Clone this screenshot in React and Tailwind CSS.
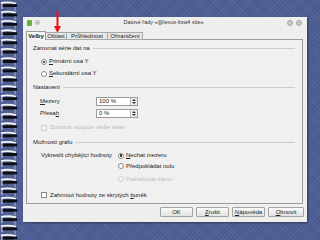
import React from 'react';

function Spiral() {
  const rings = [];
  for (let i = 0; i < 26; i++) {
    const y = 3 + i * 9.3;
    rings.push(
      <g key={i}>
        <path d={`M1 ${y} Q8 ${y - 1.5} 16 ${y + 0.5}`} stroke="#f4f4f4" strokeWidth="1.8" fill="none" />
        <path d={`M3 ${y + 2.7} L16 ${y + 2.7}`} stroke="#0d0d12" strokeWidth="2.8" strokeLinecap="round" />
        <path d={`M2 ${y + 0.5} L2 ${y + 6}`} stroke="#e4e4ea" strokeWidth="1" />
        <path d={`M15 ${y + 4} L15 ${y + 8}`} stroke="#c8c8d4" strokeWidth="0.8" />
      </g>
    );
  }
  return (
    <svg width="23" height="240" className="shrink-0">
      {rings}
    </svg>
  );
}

function Radio({ checked, disabled }) {
  return (
    <span className={`w-[6px] h-[6px] rounded-full border flex items-center justify-center shrink-0 ${disabled ? 'border-[#cfcfcf] bg-[#f4f4f4]' : 'border-[#8a8a8a] bg-white'}`}>
      {checked && <span className="w-[2.5px] h-[2.5px] rounded-full bg-[#222]" />}
    </span>
  );
}

function Check({ disabled }) {
  return <span className={`w-[6px] h-[6px] border shrink-0 ${disabled ? 'border-[#cfcfcf] bg-[#f4f4f4]' : 'border-[#8a8a8a] bg-white'}`} />;
}

function Header({ text, h }) {
  return (
    <div className={`flex items-center pl-[6px] pr-[7px] ${h}`}>
      <span>{text}</span>
      <span className="flex-1 h-px bg-[#cdcdcd] ml-[3px]" />
    </div>
  );
}

function Spin({ value }) {
  return (
    <div className="w-[42px] h-[9px] bg-white border border-[#9a9a9a] flex items-center">
      <span className="flex-1 pl-[2px] leading-none">{value}</span>
      <span className="w-[7px] h-full border-l border-[#bdbdbd] bg-[#ececec] flex flex-col items-center justify-center gap-[1px]">
        <span className="w-0 h-0 border-l-[2px] border-r-[2px] border-b-[2px] border-l-transparent border-r-transparent border-b-[#333]" />
        <span className="w-0 h-0 border-l-[2px] border-r-[2px] border-t-[2px] border-l-transparent border-r-transparent border-t-[#333]" />
      </span>
    </div>
  );
}

function Btn({ children, w }) {
  return (
    <div className={`${w} h-[10px] border border-[#a4a4a4] rounded-[1px] bg-gradient-to-b from-[#fafafa] to-[#e2e2e2] flex items-center justify-center leading-none`}>
      {children}
    </div>
  );
}

export default function App() {
  return (
    <div className="w-[320px] h-[240px] relative overflow-hidden bg-[#4f5f96] bg-[repeating-linear-gradient(45deg,rgba(255,255,255,0.06)_0px,rgba(255,255,255,0.06)_1px,transparent_1px,transparent_3px),repeating-linear-gradient(-45deg,rgba(0,0,30,0.08)_0px,rgba(0,0,30,0.08)_1px,transparent_1px,transparent_2px)] flex font-['Liberation_Sans',sans-serif] text-[6px] text-[#222]">
      <Spiral />
      <div className="mt-[17px] w-[284px] h-[205px] bg-[#efefef] flex flex-col shadow-[1px_1px_2px_rgba(0,0,0,0.4)]">
        {/* title bar */}
        <div className="h-[11px] flex items-center px-[4px] relative">
          <span className="w-[5px] h-[6px] bg-[#6fae3c] rounded-[1px] mr-[3px]" />
          <span className="w-[5px] h-[5px] bg-[#c4c4c4] rounded-full" />
          <span className="flex-1 text-center text-[5.5px] text-[#333]">Datové řady «@lexus-ltsw4 site»</span>
          <span className="w-[6px] h-[6px] rounded-full bg-[#c9c9c9] border border-[#a8a8a8] mr-[3px]" />
          <span className="w-[6px] h-[6px] rounded-full bg-[#c9c9c9] border border-[#a8a8a8] mr-[1px]" />
        </div>
        {/* tabs */}
        <div className="mt-[3px] ml-[3px] h-[9px] flex items-end relative z-10">
          <div className="w-[20px] h-[9px] border border-b-0 border-[#9a9a9a] bg-[#f7f7f7] flex items-center justify-center font-bold leading-none">Velby</div>
          <div className="w-[21px] h-[8px] border border-l-0 border-[#a8a8a8] bg-[#e8e8e8] flex items-center justify-center leading-none">Oblast</div>
          <div className="w-[41px] h-[8px] border border-l-0 border-[#a8a8a8] bg-[#e8e8e8] flex items-center justify-center leading-none">Průhlednost</div>
          <div className="w-[35px] h-[8px] border border-l-0 border-[#a8a8a8] bg-[#e8e8e8] flex items-center justify-center leading-none">Ohraničení</div>
        </div>
        {/* panel */}
        <div className="ml-[3px] mr-[4px] h-[165px] border border-[#9a9a9a] bg-[#f0f0f0] -mt-px flex flex-col pt-[3px]">
          <Header text="Zarovnat série dat na" h="h-[12px]" />
          <div className="h-[14px] flex items-center pl-[14px] gap-[2px]">
            <Radio checked />
            <span><u>P</u>rimární osa Y</span>
          </div>
          <div className="h-[10px] flex items-center pl-[14px] gap-[2px]">
            <Radio />
            <span><u>S</u>ekundární osa Y</span>
          </div>
          <Header text="Nastavení" h="h-[18px]" />
          <div className="h-[10px] flex items-center pl-[13px]">
            <span className="w-[56px]"><u>M</u>ezery</span>
            <Spin value="100 %" />
          </div>
          <div className="h-[14px] flex items-center pl-[13px]">
            <span className="w-[56px]">Přesa<u>h</u></span>
            <Spin value="0 %" />
          </div>
          <div className="h-[16px] flex items-center pl-[14px] gap-[3px] text-[#bcbcbc]">
            <Check disabled />
            <span>Zobrazit sloupce vedle sebe</span>
          </div>
          <Header text="Možnosti grafu" h="h-[14px]" />
          <div className="h-[12px] flex items-center pl-[14px]">
            <span className="w-[77px]">Vykreslit chybějící hodnoty</span>
            <Radio checked />
            <span className="ml-[2px]"><u>N</u>echat mezeru</span>
          </div>
          <div className="h-[10px] flex items-center pl-[91px]">
            <Radio />
            <span className="ml-[2px]">Předpokládat nulu</span>
          </div>
          <div className="h-[16px] flex items-center pl-[91px] text-[#bcbcbc]">
            <Radio disabled />
            <span className="ml-[2px]">Pokračovat čárou</span>
          </div>
          <div className="h-[16px] flex items-center pl-[14px] gap-[3px]">
            <Check />
            <span>Zahrnout hodnoty ze skrytých <u>b</u>uněk</span>
          </div>
        </div>
        {/* buttons */}
        <div className="mt-[3px] mr-[3px] flex justify-end gap-[3px]">
          <Btn w="w-[33px]">OK</Btn>
          <Btn w="w-[33px]"><span><u>Z</u>rušit</span></Btn>
          <Btn w="w-[33px]"><span><u>N</u>ápověda</span></Btn>
          <Btn w="w-[36px]"><span><u>O</u>bnovit</span></Btn>
        </div>
      </div>
      {/* red arrow */}
      <svg className="absolute left-[53px] top-[11px]" width="9" height="23">
        <path d="M4.5 0 L4.5 16" stroke="#e11" strokeWidth="2" />
        <path d="M1 15 L8 15 L4.5 22 Z" fill="#e11" />
      </svg>
    </div>
  );
}
